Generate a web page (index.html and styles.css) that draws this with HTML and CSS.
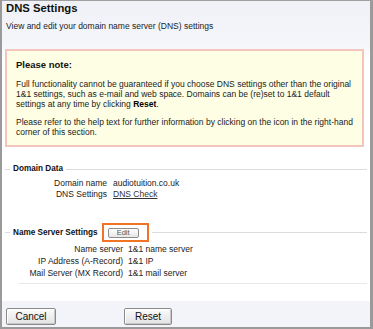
FILE: index.html
```html
<!DOCTYPE html>
<html>
<head>
<meta charset="utf-8">
<link rel="stylesheet" href="styles.css">
</head>
<body>
<div class="frame">
  <header class="head">
    <h1 class="title">DNS Settings</h1>
    <p class="subtitle">View and edit your domain name server (DNS) settings</p>
  </header>

  <div class="note">
    <h2 class="note-title">Please note:</h2>
    <p class="note-text">Full functionality cannot be guaranteed if you choose DNS settings other than the original 1&amp;1 settings, such as e-mail and web space. Domains can be (re)set to 1&amp;1 default settings at any time by clicking <b>Reset</b>.</p>
    <p class="note-text">Please refer to the help text for further information by clicking on the icon in the right-hand corner of this section.</p>
  </div>

  <section class="group domain">
    <div class="legend"><span class="legend-text">Domain Data</span></div>
    <div class="kv kv-domain">
      <span class="k">Domain name</span><span class="v">audiotuition.co.uk</span>
      <span class="k">DNS Settings</span><span class="v"><a class="link" href="#">DNS Check</a></span>
    </div>
  </section>

  <section class="group ns">
    <div class="legend">
      <span class="legend-text">Name Server Settings</span>
      <span class="highlight"><button class="btn-edit">Edit</button></span>
    </div>
    <div class="kv kv-ns">
      <span class="k">Name server</span><span class="v">1&amp;1 name server</span>
      <span class="k">IP Address (A-Record)</span><span class="v">1&amp;1 IP</span>
      <span class="k">Mail Server (MX Record)</span><span class="v">1&amp;1 mail server</span>
    </div>
  </section>

  <footer class="foot">
    <button class="btn">Cancel</button>
    <button class="btn">Reset</button>
  </footer>
</div>
</body>
</html>
```

FILE: styles.css
```css
html, body {
  margin: 0;
  padding: 0;
  background: #ffffff;
}

.frame {
  box-sizing: border-box;
  width: 373px;
  height: 329px;
  border-top: 1px solid #a0a0a0;
  border-left: 2px solid #9a9a9a;
  border-right: 3px solid #9a9a9a;
  border-bottom: 2px solid #9a9a9a;
  display: flex;
  flex-direction: column;
  font-family: "Liberation Sans", Arial, sans-serif;
  color: #222;
  background: linear-gradient(#eff1f7 0px, #f5f6fa 44px, #ffffff 60px);
}

.head {
  padding: 0 0 0 4px;
}

.title {
  margin: 0;
  font-size: 11.3px;
  line-height: 14px;
  font-weight: bold;
  color: #111;
}

.subtitle {
  margin: 6px 0 0 0;
  font-size: 8.5px;
  line-height: 11px;
  color: #222;
}

.note {
  margin: 17px 6px 0 3px;
  border: 2px solid #f3c5bc;
  background: #fefee4;
  padding: 8px 4px 8px 9px;
}

.note-title {
  margin: 0;
  font-size: 9.5px;
  line-height: 12px;
  font-weight: bold;
  color: #111;
}

.note-text {
  margin: 8px 0 0 0;
  font-size: 8.5px;
  line-height: 10px;
  color: #222;
}

.note-text b {
  color: #000;
}

.group {
  display: flex;
  flex-direction: column;
}

.domain {
  margin-top: 16px;
}

.ns {
  margin-top: 23px;
  margin-left: 16px;
  margin-right: 3px;
  padding-bottom: 4px;
  border-bottom: 1px solid #e8e8ec;
}

.legend {
  display: flex;
  align-items: center;
  margin: 0 3px 0 3px;
  gap: 3px;
}

.legend::before {
  content: "";
  width: 5px;
  height: 1px;
  background: #dcdce0;
}

.legend::after {
  content: "";
  flex: 1;
  height: 1px;
  background: #dcdce0;
}

.ns .legend {
  margin: 0 0 0 -13px;
}

.legend-text {
  font-size: 8.2px;
  line-height: 12px;
  font-weight: bold;
  color: #111;
}

.highlight {
  display: inline-flex;
  border: 2px solid #f07326;
  padding: 3px 8px 2px 4px;
  margin-left: 1px;
}

.btn-edit {
  box-sizing: border-box;
  width: 31px;
  height: 10px;
  padding: 0;
  margin: 0;
  border: 1px solid #8c8c8c;
  border-radius: 2px;
  background: linear-gradient(#ffffff, #e6e6e6);
  font-family: "Liberation Sans", Arial, sans-serif;
  font-size: 7.5px;
  line-height: 8px;
  color: #555;
}

.kv {
  display: grid;
  font-size: 8.5px;
  color: #222;
}

.kv-domain {
  grid-template-columns: 105px auto;
  column-gap: 6px;
  line-height: 11px;
  margin-top: 3px;
}

.kv-ns {
  grid-template-columns: 105px auto;
  column-gap: 5px;
  line-height: 12px;
  margin-top: 1px;
}

.k {
  text-align: right;
  white-space: nowrap;
}

.v {
  white-space: nowrap;
}

.link {
  color: #333;
  text-decoration: underline;
}

.foot {
  margin-top: auto;
  height: 26px;
  box-sizing: border-box;
  padding: 7px 0 0 4px;
  display: flex;
  align-items: flex-start;
  gap: 68px;
  background: #f3f4fa;
}

.btn {
  box-sizing: border-box;
  height: 17px;
  width: 50px;
  padding: 0;
  margin: 0;
  border: 1px solid #8a8a8a;
  border-radius: 2px;
  box-shadow: inset 1px 1px 0 #ffffff, inset -1px -1px 0 #c8c8c8;
  background: linear-gradient(#fbfbfb, #e2e2e2);
  font-family: "Liberation Sans", Arial, sans-serif;
  font-size: 10px;
  color: #111;
}

.btn + .btn {
  width: 48px;
}
```
